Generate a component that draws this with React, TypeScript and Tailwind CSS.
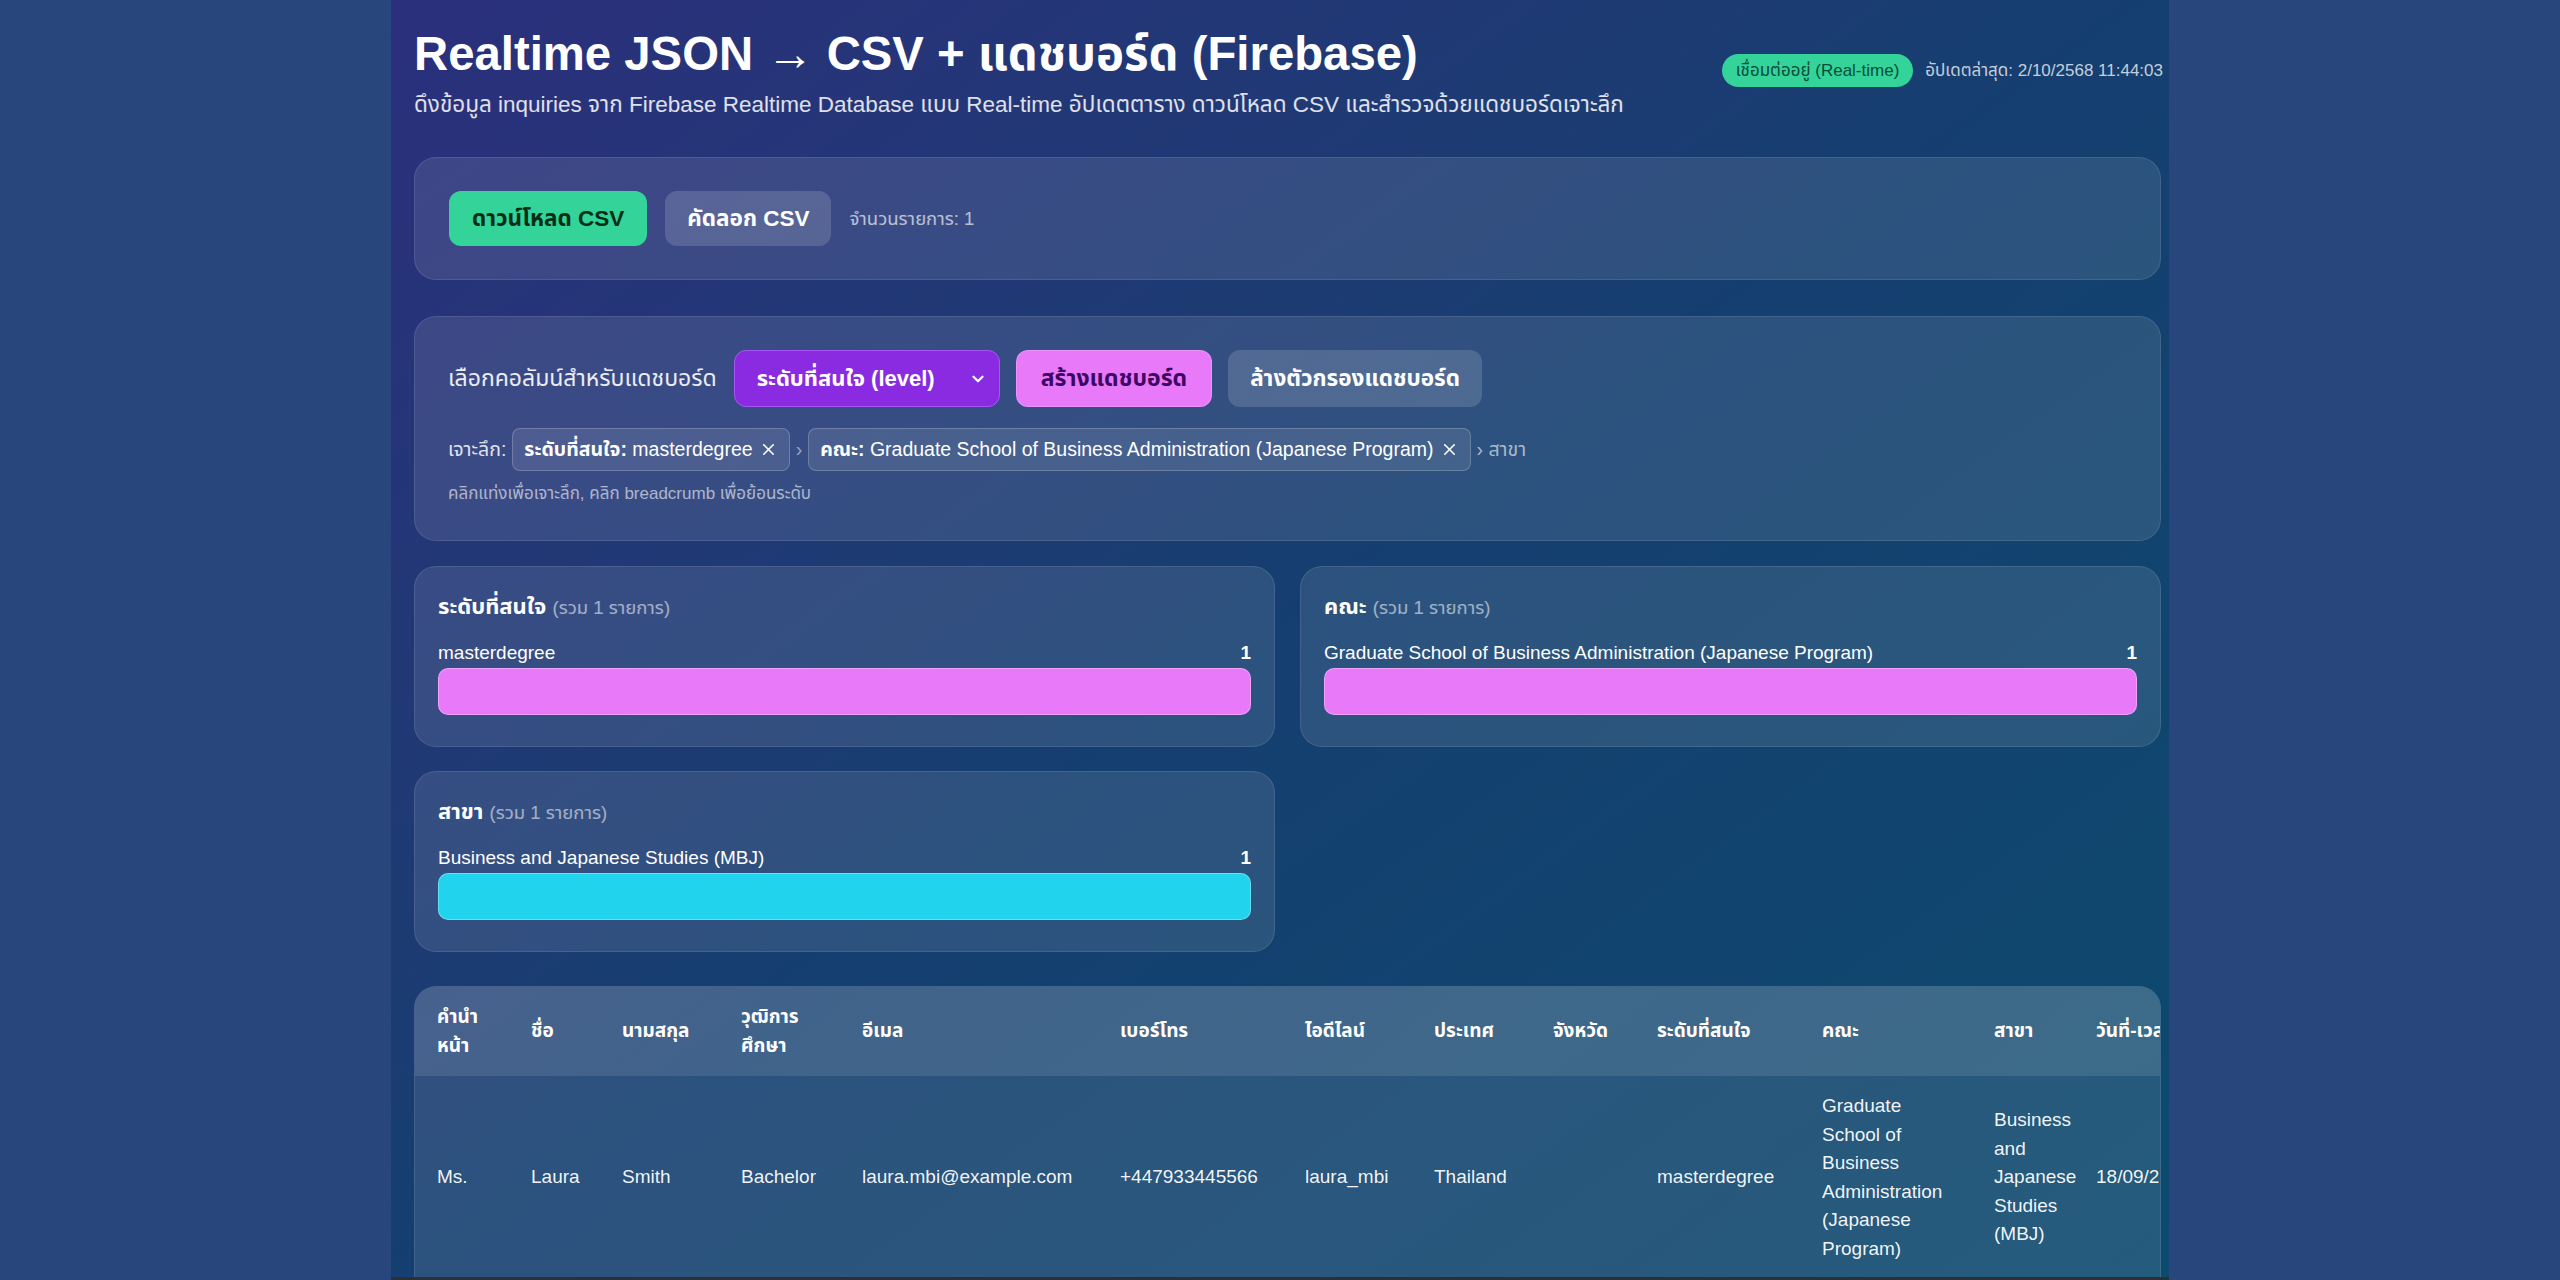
import { ChevronDown, X } from "lucide-react";

const font = "font-['Liberation_Sans','Noto_Sans_Thai','Leelawadee_UI','Noto_Sans',sans-serif]";

type Col = { key: string; label: string; width: number };

const columns: Col[] = [
  { key: "prefix", label: "คำนำหน้า", width: 94 },
  { key: "first", label: "ชื่อ", width: 91 },
  { key: "last", label: "นามสกุล", width: 119 },
  { key: "edu", label: "วุฒิการศึกษา", width: 121 },
  { key: "email", label: "อีเมล", width: 258 },
  { key: "phone", label: "เบอร์โทร", width: 185 },
  { key: "line", label: "ไอดีไลน์", width: 129 },
  { key: "country", label: "ประเทศ", width: 119 },
  { key: "province", label: "จังหวัด", width: 104 },
  { key: "level", label: "ระดับที่สนใจ", width: 165 },
  { key: "faculty", label: "คณะ", width: 172 },
  { key: "major", label: "สาขา", width: 102 },
  { key: "date", label: "วันที่-เวลา", width: 230 },
  { key: "source", label: "ช่องทาง", width: 160 },
];

const row: Record<string, string> = {
  prefix: "Ms.",
  first: "Laura",
  last: "Smith",
  edu: "Bachelor",
  email: "laura.mbi@example.com",
  phone: "+447933445566",
  line: "laura_mbi",
  country: "Thailand",
  province: "",
  level: "masterdegree",
  faculty: "Graduate School of Business Administration (Japanese Program)",
  major: "Business and Japanese Studies (MBJ)",
  date: "18/09/2568 14:22:10",
  source: "website",
};

type Chart = { title: string; label: string; value: number; color: string };

function ChartCard({ title, label, value, color }: Chart) {
  return (
    <div className="rounded-[22px] border border-white/10 bg-white/10 px-[23px] pb-[31px] pt-[23px]">
      <h3 className="text-[22px] font-bold leading-[34px] text-white">
        {title} <span className="text-[18.5px] font-normal text-white/55">(รวม 1 รายการ)</span>
      </h3>
      <div className="mt-[14px] flex items-center justify-between text-[19px] leading-[27px] text-white">
        <span>{label}</span>
        <span className="font-bold">{value}</span>
      </div>
      <div className={`mt-[2px] h-[47px] w-full rounded-[10px] border border-white/30 ${color}`} />
    </div>
  );
}

export default function App() {
  return (
    <div className={`h-[1280px] w-full overflow-hidden bg-[#28467b] ${font}`}>
      <div className="mx-auto flex h-full w-[1778px] flex-col bg-gradient-to-br from-[#2b2f7c] via-[#153f70] to-[#0c4a6e]">
        <div className="min-h-0 flex-1 overflow-hidden pl-[23px] pr-[8px]">
          <header className="flex items-center justify-between pt-[26px]">
            <div>
              <h1 className="text-[47.3px] font-bold leading-[56px] text-white">Realtime JSON → CSV + แดชบอร์ด (Firebase)</h1>
              <p className="mt-[6px] text-[22.5px] leading-[33px] text-white/85">
                ดึงข้อมูล inquiries จาก Firebase Realtime Database แบบ Real-time อัปเดตตาราง ดาวน์โหลด CSV และสำรวจด้วยแดชบอร์ดเจาะลึก
              </p>
            </div>
            <div className="flex items-center gap-[12px] pb-[6px]">
              <span className="flex h-[33px] items-center rounded-full bg-[#34d399] px-[14px] text-[17px] text-[#064e3b]">เชื่อมต่ออยู่ (Real-time)</span>
              <span className="mr-[-2px] text-[17px] text-white/75">อัปเดตล่าสุด: 2/10/2568 11:44:03</span>
            </div>
          </header>

          <section className="mt-[36px] flex items-center gap-[18px] rounded-[22px] border border-white/10 bg-white/10 px-[34px] py-[33px]">
            <button type="button" className="h-[55px] rounded-[12px] bg-[#34d399] px-[23px] text-[22.5px] font-bold text-[#052e16]">ดาวน์โหลด CSV</button>
            <button type="button" className="h-[55px] rounded-[12px] bg-white/15 px-[22px] text-[22.5px] font-bold text-white">คัดลอก CSV</button>
            <span className="text-[18.5px] text-white/65">จำนวนรายการ: 1</span>
          </section>

          <section className="mt-[36px] rounded-[22px] border border-white/10 bg-white/10 px-[33px] pb-[34px] pt-[33px]">
            <div className="flex items-center gap-[16px]">
              <span className="mr-[1px] text-[23px] text-white/90">เลือกคอลัมน์สำหรับแดชบอร์ด</span>
              <div className="flex h-[57px] w-[266px] items-center justify-between rounded-[12px] border border-[#a855f7] bg-[#8a2be2] pl-[22px] pr-[12px] text-[22px] font-bold text-white">
                <span>ระดับที่สนใจ (level)</span>
                <ChevronDown className="h-[18px] w-[18px]" strokeWidth={3} />
              </div>
              <button type="button" className="h-[57px] rounded-[12px] border border-white/20 bg-[#e879f9] px-[24px] text-[23px] font-bold text-[#3b0764]">สร้างแดชบอร์ด</button>
              <button type="button" className="h-[57px] rounded-[12px] bg-white/15 px-[22px] text-[22.5px] font-bold text-white">ล้างตัวกรองแดชบอร์ด</button>
            </div>
            <div className="mt-[21px] flex items-center gap-[6px] text-[19.5px] text-white/85">
              <span>เจาะลึก:</span>
              <span className="flex h-[43px] items-center gap-[6px] rounded-[8px] border border-white/20 bg-white/10 px-[11px] text-white">
                <span><b>ระดับที่สนใจ:</b> masterdegree</span>
                <X className="h-[19px] w-[19px]" strokeWidth={2} />
              </span>
              <span className="text-white/50">›</span>
              <span className="flex h-[43px] items-center gap-[6px] rounded-[8px] border border-white/20 bg-white/10 px-[11px] text-white">
                <span><b>คณะ:</b> Graduate School of Business Administration (Japanese Program)</span>
                <X className="h-[19px] w-[19px]" strokeWidth={2} />
              </span>
              <span className="text-white/60">› สาขา</span>
            </div>
            <p className="mt-[11px] text-[17px] leading-[24px] text-white/60">คลิกแท่งเพื่อเจาะลึก, คลิก breadcrumb เพื่อย้อนระดับ</p>
          </section>

          <section className="mt-[25px] grid grid-cols-2 gap-x-[25px] gap-y-[24px]">
            <ChartCard title="ระดับที่สนใจ" label="masterdegree" value={1} color="bg-[#e879f9]" />
            <ChartCard title="คณะ" label="Graduate School of Business Administration (Japanese Program)" value={1} color="bg-[#e879f9]" />
            <ChartCard title="สาขา" label="Business and Japanese Studies (MBJ)" value={1} color="bg-[#22d3ee]" />
          </section>

          <section className="mt-[34px] overflow-hidden rounded-t-[22px] border border-white/10 bg-white/10">
            <table className="w-[1969px] table-fixed border-collapse text-left text-[19px] leading-[28.5px] text-white">
              <colgroup>
                {columns.map((c) => (
                  <col key={c.key} style={{ width: c.width }} />
                ))}
              </colgroup>
              <thead className="bg-white/10">
                <tr>
                  {columns.map((c) => (
                    <th key={c.key} className="py-[16px] pl-[22px] pr-[14px] align-middle font-bold">{c.label}</th>
                  ))}
                </tr>
              </thead>
              <tbody>
                <tr>
                  {columns.map((c) => (
                    <td key={c.key} className="py-[16px] pl-[22px] pr-[14px] align-middle text-white/95">{row[c.key]}</td>
                  ))}
                </tr>
              </tbody>
            </table>
          </section>
        </div>
        <div className="h-[3px] flex-none bg-[#2b2f36]" />
      </div>
    </div>
  );
}
